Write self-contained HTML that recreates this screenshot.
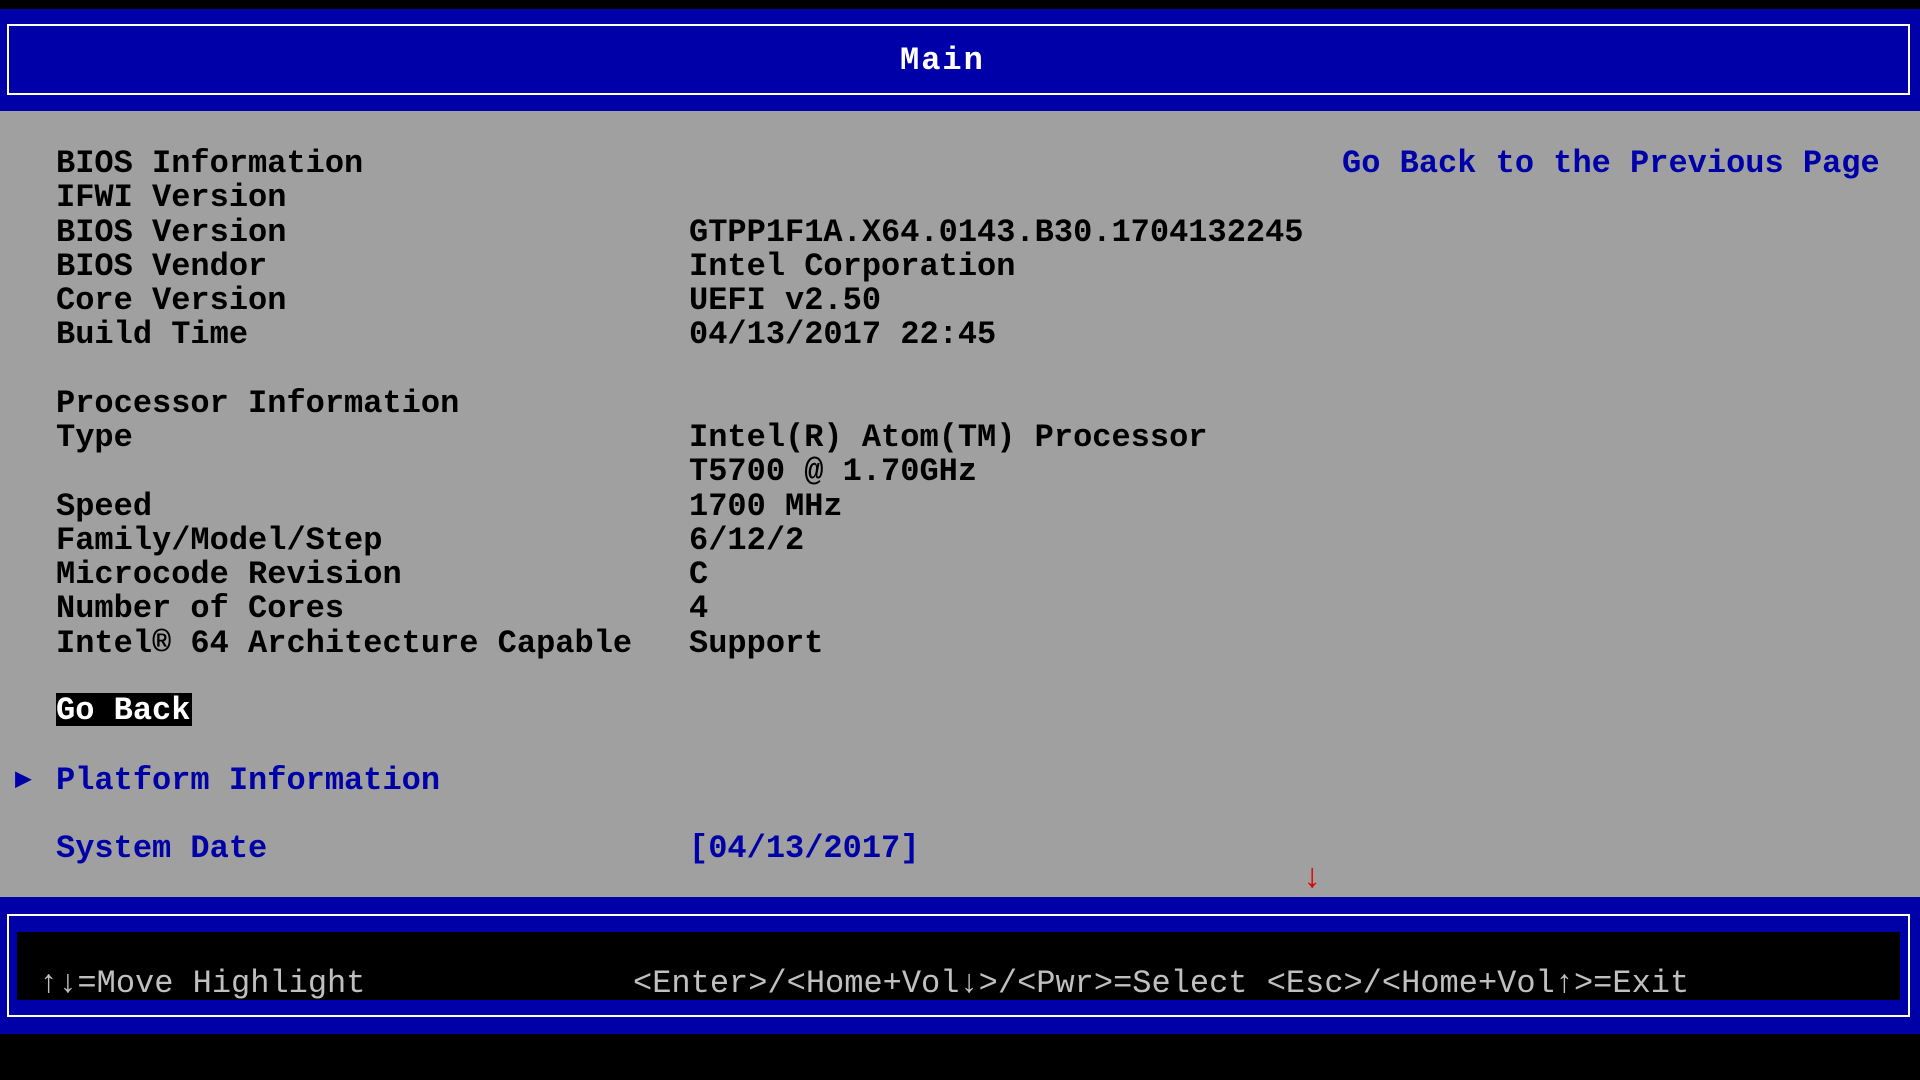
<!DOCTYPE html>
<html><head><meta charset="utf-8"><style>
html,body{margin:0;padding:0;width:1920px;height:1080px;overflow:hidden;background:#000;}
body{position:relative;font-family:"Liberation Mono",monospace;font-weight:bold;font-size:32px;}
.a{position:absolute;white-space:pre;line-height:34px;height:34px;}
.k{color:#000;}
.b{color:#0000a8;}
</style></head><body>
<div style="position:absolute;left:0;top:9px;width:1920px;height:102px;background:#0000a8"></div>
<div style="position:absolute;left:7px;top:24px;width:1899px;height:67px;border:2px solid #fff;"></div>
<div class="a" style="left:900px;top:44px;color:#fff;letter-spacing:2px">Main</div>
<div style="position:absolute;left:0;top:111px;width:1920px;height:786px;background:#a0a0a0"></div>

<div class="a k" style="left:56px;top:147px">BIOS Information</div>
<div class="a k" style="left:56px;top:181px">IFWI Version</div>
<div class="a k" style="left:56px;top:216px">BIOS Version</div>
<div class="a k" style="left:56px;top:250px">BIOS Vendor</div>
<div class="a k" style="left:56px;top:284px">Core Version</div>
<div class="a k" style="left:56px;top:318px">Build Time</div>
<div class="a k" style="left:56px;top:387px">Processor Information</div>
<div class="a k" style="left:56px;top:421px">Type</div>
<div class="a k" style="left:56px;top:490px">Speed</div>
<div class="a k" style="left:56px;top:524px">Family/Model/Step</div>
<div class="a k" style="left:56px;top:558px">Microcode Revision</div>
<div class="a k" style="left:56px;top:592px">Number of Cores</div>
<div class="a k" style="left:56px;top:627px">Intel® 64 Architecture Capable</div>

<div class="a k" style="left:689px;top:216px">GTPP1F1A.X64.0143.B30.1704132245</div>
<div class="a k" style="left:689px;top:250px">Intel Corporation</div>
<div class="a k" style="left:689px;top:284px">UEFI v2.50</div>
<div class="a k" style="left:689px;top:318px">04/13/2017 22:45</div>
<div class="a k" style="left:689px;top:421px">Intel(R) Atom(TM) Processor</div>
<div class="a k" style="left:689px;top:455px">T5700 @ 1.70GHz</div>
<div class="a k" style="left:689px;top:490px">1700 MHz</div>
<div class="a k" style="left:689px;top:524px">6/12/2</div>
<div class="a k" style="left:689px;top:558px">C</div>
<div class="a k" style="left:689px;top:592px">4</div>
<div class="a k" style="left:689px;top:627px">Support</div>

<div class="a b" style="left:1342px;top:147px">Go Back to the Previous Page</div>

<div style="position:absolute;left:56px;top:693px;width:136px;height:33px;background:#000"></div>
<div class="a" style="left:56px;top:694px;color:#fff">Go Back</div>

<div class="a b" style="left:15px;top:764px;font-size:28px">▶</div>
<div class="a b" style="left:56px;top:764px">Platform Information</div>
<div class="a b" style="left:56px;top:832px">System Date</div>
<div class="a b" style="left:689px;top:832px">[04/13/2017]</div>
<div class="a" style="left:1302px;top:862px;color:#e00000;font-size:34px">↓</div>

<div style="position:absolute;left:0;top:897px;width:1920px;height:137px;background:#0000a8"></div>
<div style="position:absolute;left:7px;top:914px;width:1899px;height:99px;border:2px solid #fff;"></div>
<div style="position:absolute;left:17px;top:932px;width:1883px;height:68px;background:#000"></div>
<div class="a" style="left:39px;top:967px;color:#c0c0c0;font-weight:normal">↑↓=Move Highlight</div>
<div class="a" style="left:633px;top:967px;color:#c0c0c0;font-weight:normal">&lt;Enter&gt;/&lt;Home+Vol↓&gt;/&lt;Pwr&gt;=Select &lt;Esc&gt;/&lt;Home+Vol↑&gt;=Exit</div>
</body></html>
